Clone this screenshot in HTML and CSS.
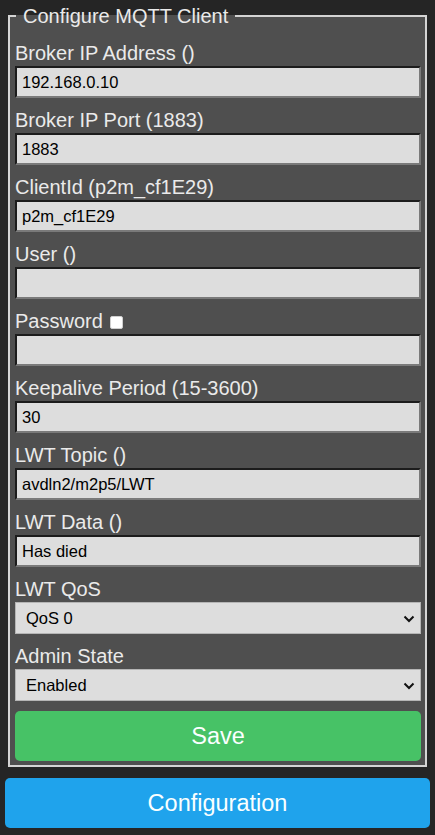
FILE: index.html
```html
<!DOCTYPE html>
<html>
<head>
<meta charset="utf-8">
<link rel="stylesheet" href="styles.css">
</head>
<body>
<div class="page">
  <form class="form">
    <fieldset class="box">
      <legend class="title">Configure MQTT Client</legend>
      <div class="field"><label class="lbl">Broker IP Address ()</label><input class="inp" value="192.168.0.10"></div>
      <div class="field"><label class="lbl">Broker IP Port (1883)</label><input class="inp" value="1883"></div>
      <div class="field"><label class="lbl">ClientId (p2m_cf1E29)</label><input class="inp" value="p2m_cf1E29"></div>
      <div class="field"><label class="lbl">User ()</label><input class="inp" value=""></div>
      <div class="field"><label class="lbl">Password <input type="checkbox" class="chk"></label><input class="inp" type="password" value=""></div>
      <div class="field"><label class="lbl">Keepalive Period (15-3600)</label><input class="inp" value="30"></div>
      <div class="field"><label class="lbl">LWT Topic ()</label><input class="inp" value="avdln2/m2p5/LWT"></div>
      <div class="field"><label class="lbl">LWT Data ()</label><input class="inp" value="Has died"></div>
      <div class="field"><label class="lbl">LWT QoS</label>
        <div class="sel-wrap">
          <select class="sel"><option>QoS 0</option><option>QoS 1</option><option>QoS 2</option></select>
          <svg class="chev" width="12" height="8" viewBox="0 0 12 8"><path d="M1.5 1.5 L6 6 L10.5 1.5" fill="none" stroke="#111" stroke-width="2"/></svg>
        </div>
      </div>
      <div class="field"><label class="lbl">Admin State</label>
        <div class="sel-wrap">
          <select class="sel"><option>Enabled</option><option>Disabled</option></select>
          <svg class="chev" width="12" height="8" viewBox="0 0 12 8"><path d="M1.5 1.5 L6 6 L10.5 1.5" fill="none" stroke="#111" stroke-width="2"/></svg>
        </div>
      </div>
      <button type="button" class="btn save">Save</button>
    </fieldset>
  </form>
  <button type="button" class="btn nav">Configuration</button>
</div>
</body>
</html>
```
FILE: styles.css
```css
html, body {
  margin: 0;
  background: #252525;
}
body {
  font-family: "Liberation Sans", Arial, sans-serif;
  color: #eaeaea;
}
.page {
  padding: 5px 5px 0;
}
.form {
  margin: 0;
}
.box {
  margin: 0 3px;
  padding: 4px 4px 4px 5px;
  border: 2px solid #d4d4d4;
  background: #4f4f4f;
  min-width: 0;
}
.title {
  font-size: 20px;
  line-height: 22px;
  padding: 0 7px;
  margin-left: 1px;
  color: #eaeaea;
}
.field {
  margin-top: 11px;
}
.lbl {
  display: block;
  font-size: 20px;
  line-height: 22px;
  margin-bottom: 2px;
  color: #eaeaea;
}
.chk {
  appearance: none;
  -webkit-appearance: none;
  width: 13px;
  height: 13px;
  margin: 0 0 0 2px;
  background: #fff;
  border: 1px solid #cfcfcf;
  border-radius: 2px;
  vertical-align: -1px;
}
.inp {
  display: block;
  width: 100%;
  box-sizing: border-box;
  height: 32px;
  margin: 0;
  padding: 0 5px;
  border: 2px solid;
  border-color: #1c1c1c #7a7a7a #7a7a7a #1c1c1c;
  background: #dddddd;
  color: #000;
  font-family: "Liberation Sans", Arial, sans-serif;
  font-size: 16.5px;
  outline: none;
}
.sel-wrap {
  position: relative;
}
.sel {
  display: block;
  width: 100%;
  box-sizing: border-box;
  height: 32px;
  margin: 0;
  padding: 0 0 0 10px;
  appearance: none;
  -webkit-appearance: none;
  border: 1px solid #b5b5b5;
  border-radius: 0;
  background: #dddddd;
  color: #000;
  font-family: "Liberation Sans", Arial, sans-serif;
  font-size: 16.5px;
}
.chev {
  position: absolute;
  right: 6px;
  top: 13px;
  pointer-events: none;
}
.btn {
  display: block;
  width: 100%;
  height: 50px;
  border: 0;
  border-radius: 5px;
  color: #faffff;
  font-family: "Liberation Sans", Arial, sans-serif;
  font-size: 23.5px;
  padding: 0;
}
.save {
  margin-top: 10px;
  background: #47c266;
}
.nav {
  margin-top: 11px;
  background: #1fa3ec;
}
```
